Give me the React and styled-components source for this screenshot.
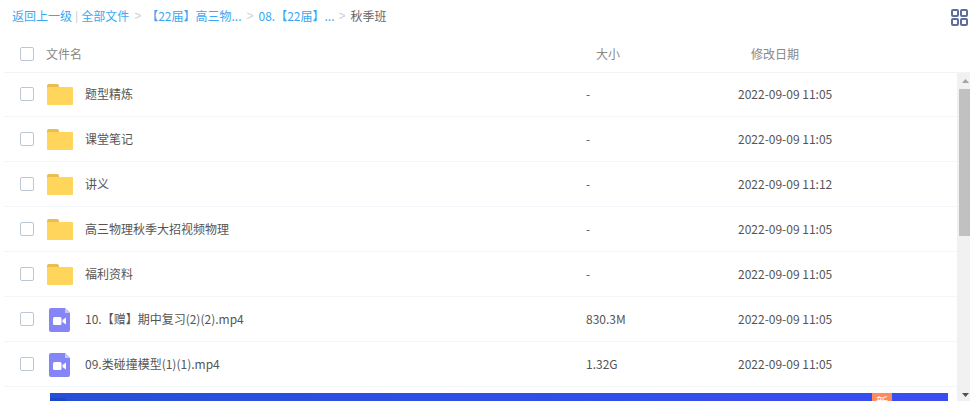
import React from "react";
import styled, { createGlobalStyle } from "styled-components";

const GlobalStyle = createGlobalStyle`
	html, body {
		margin: 0;
		padding: 0;
		height: 401px;
		overflow: hidden;
		background: #fff;
	}
	body {
		font-family: "Noto Sans CJK SC", "Liberation Sans", sans-serif;
		font-size: 12px;
	}
`;

const Page = styled.div`
	width: 970px;
	height: 401px;
	overflow: hidden;
	display: flex;
	flex-direction: column;
`;

const TopBar = styled.div`
	height: 35px;
	flex: none;
	display: flex;
	align-items: center;
	justify-content: space-between;
	padding: 0 2px 4px 12px;
	box-sizing: border-box;
`;

const Crumbs = styled.div`
	display: flex;
	align-items: center;
	line-height: 16px;
	white-space: nowrap;
`;

const CrumbLink = styled.a`
	color: #3aa8f2;
`;

const CrumbSep = styled.span`
	color: #c6d3e4;
	margin: 0 ${(props) => props.$right || 3}px 0 ${(props) => props.$left || 3}px;
	font-family: "Liberation Sans", sans-serif;
`;

const CrumbCurrent = styled.span`
	color: #666;
`;

const GridWrap = styled.span`
	display: flex;
	margin-top: 3px;
`;

const HeaderRow = styled.div`
	height: 38px;
	flex: none;
	box-sizing: border-box;
	margin-left: 4px;
	display: grid;
	grid-template-columns: 592px 155px 1fr;
	align-items: center;
	border-bottom: 1px solid #f2f3f5;
	color: #888;
`;

const HeaderName = styled.div`
	display: flex;
	align-items: center;
	padding-left: 16px;
	gap: 12px;
`;

const Body = styled.div`
	flex: 1;
	display: flex;
	min-height: 0;
`;

const List = styled.div`
	flex: 1;
	min-width: 0;
	margin-top: -1px;
	padding-left: 4px;
`;

const Row = styled.div`
	height: 45px;
	box-sizing: border-box;
	display: grid;
	grid-template-columns: 582px 152px 1fr;
	align-items: center;
	border-bottom: 1px solid #f2f5f9;
	color: #555;
`;

const NameCell = styled.div`
	display: flex;
	align-items: center;
	padding-left: 16px;
`;

const CellText = styled.span`
	margin-bottom: 2px;
`;

const Check = styled.span`
	width: 14px;
	height: 14px;
	flex: none;
	box-sizing: border-box;
	border: 1px solid #bcc7d6;
	border-radius: 2px;
	background: #fff;
`;

const IconSlot = styled.span`
	width: 26px;
	height: 26px;
	margin: 0 12px 0 13px;
	padding: ${(props) => (props.$video ? "2px 1px 0 0" : "0")};
	box-sizing: border-box;
	flex: none;
	display: flex;
	align-items: center;
	justify-content: center;
`;

const Banner = styled.div`
	height: 20px;
	margin: 6px 9px 0 46px;
	position: relative;
	background: linear-gradient(90deg, #2450d8, #3a4df2);

	&::before {
		content: "";
		position: absolute;
		left: 0;
		top: 5px;
		width: 16px;
		height: 15px;
		border-radius: 0 3px 0 0;
		background: #1e46c8;
	}
`;

const NewTag = styled.span`
	position: absolute;
	left: 822px;
	top: 0;
	width: 20px;
	height: 20px;
	background: #ff8a5c;
	color: #fff;
	font-size: 12px;
	line-height: 18px;
	text-align: center;
`;

const Scrollbar = styled.div`
	width: 13px;
	flex: none;
	background: #f1f1f1;
	display: flex;
	flex-direction: column;
`;

const ArrowBox = styled.div`
	height: 16px;
	flex: none;
	box-sizing: border-box;
	padding-left: 3px;
	padding-top: ${(props) => (props.$down ? 3 : 0)}px;
	display: flex;
	align-items: center;
	justify-content: center;
`;

const Thumb = styled.div`
	height: 147px;
	margin-left: 2px;
	background: #c1c1c1;
	flex: none;
`;

const Spacer = styled.div`
	flex: 1;
`;

const GridIcon = () => (
	<svg width="17" height="17" viewBox="0 0 17 17" fill="none" stroke="#5c6f9c" strokeWidth="2">
		<rect x="1" y="1" width="6" height="6" rx="1" />
		<rect x="10" y="1" width="6" height="6" rx="1" />
		<rect x="1" y="10" width="6" height="6" rx="1" />
		<rect x="10" y="10" width="6" height="6" rx="1" />
	</svg>
);

const FolderIcon = () => (
	<svg width="26" height="21" viewBox="0 0 26 21">
		<path d="M0 2a2 2 0 0 1 2-2h8a2 2 0 0 1 2 2v2H0z" fill="#eabd50" />
		<path d="M1 3h24a1 1 0 0 1 1 1v16a1 1 0 0 1-1 1H1a1 1 0 0 1-1-1V4a1 1 0 0 1 1-1z" fill="#ffd55c" />
	</svg>
);

const VideoIcon = () => (
	<svg width="21" height="24" viewBox="0 0 21 24">
		<path d="M2 0h14l5 5v17a2 2 0 0 1-2 2H2a2 2 0 0 1-2-2V2a2 2 0 0 1 2-2z" fill="#8585f5" />
		<path d="M16 0l5 5h-5z" fill="#c5c5fa" />
		<rect x="4" y="9" width="8.500" height="8" rx="1.500" fill="#fff" />
		<path d="M13.500 12l3.500-2.500v7l-3.500-2.500z" fill="#fff" />
	</svg>
);

const Triangle = ({ down }) => (
	<svg width="7" height="4" viewBox="0 0 7 4">
		<path d={down ? "M0 0h7L3.500 4z" : "M0 4h7L3.500 0z"} fill={down ? "#505050" : "#a3a3a3"} />
	</svg>
);

const rows = [
	{ name: "题型精炼", size: "-", date: "2022-09-09 11:05", type: "folder" },
	{ name: "课堂笔记", size: "-", date: "2022-09-09 11:05", type: "folder" },
	{ name: "讲义", size: "-", date: "2022-09-09 11:12", type: "folder" },
	{ name: "高三物理秋季大招视频物理", size: "-", date: "2022-09-09 11:05", type: "folder" },
	{ name: "福利资料", size: "-", date: "2022-09-09 11:05", type: "folder" },
	{ name: "10.【赠】期中复习(2)(2).mp4", size: "830.3M", date: "2022-09-09 11:05", type: "video" },
	{ name: "09.类碰撞模型(1)(1).mp4", size: "1.32G", date: "2022-09-09 11:05", type: "video" },
];

export default function App() {
	return (
		<Page>
			<GlobalStyle />
			<TopBar>
				<Crumbs>
					<CrumbLink>返回上一级</CrumbLink>
					<CrumbSep>|</CrumbSep>
					<CrumbLink>全部文件</CrumbLink>
					<CrumbSep $left={5} $right={5}>&gt;</CrumbSep>
					<CrumbLink>【22届】高三物...</CrumbLink>
					<CrumbSep $left={5} $right={5}>&gt;</CrumbSep>
					<CrumbLink>08.【22届】...</CrumbLink>
					<CrumbSep $left={4} $right={5}>&gt;</CrumbSep>
					<CrumbCurrent>秋季班</CrumbCurrent>
				</Crumbs>
				<GridWrap>
					<GridIcon />
				</GridWrap>
			</TopBar>
			<HeaderRow>
				<HeaderName>
					<Check />
					<span>文件名</span>
				</HeaderName>
				<span>大小</span>
				<span>修改日期</span>
			</HeaderRow>
			<Body>
				<List>
					{rows.map((el) => {
						return (
							<Row key={el.name}>
								<NameCell>
									<Check />
									<IconSlot $video={el.type === "video"}>
										{el.type === "folder" ? <FolderIcon /> : <VideoIcon />}
									</IconSlot>
									<CellText>{el.name}</CellText>
								</NameCell>
								<CellText>{el.size}</CellText>
								<CellText>{el.date}</CellText>
							</Row>
						);
					})}
					<Banner>
						<NewTag>新</NewTag>
					</Banner>
				</List>
				<Scrollbar>
					<ArrowBox>
						<Triangle />
					</ArrowBox>
					<Thumb />
					<Spacer />
					<ArrowBox $down>
						<Triangle down />
					</ArrowBox>
				</Scrollbar>
			</Body>
		</Page>
	);
}
